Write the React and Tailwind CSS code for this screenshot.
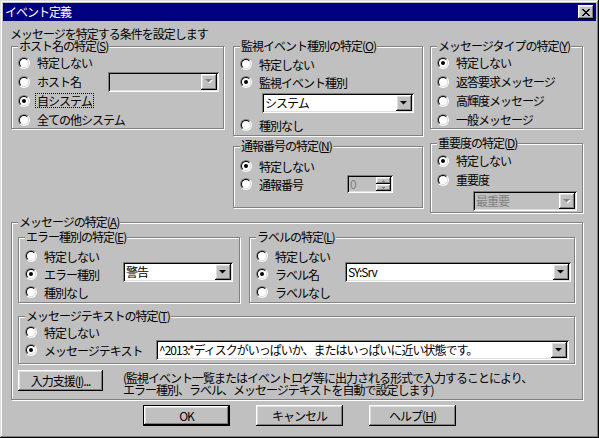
const raised =
  "shadow-[inset_-1px_-1px_#000,inset_1px_1px_#fff,inset_-2px_-2px_#808080,inset_2px_2px_#dfdfdf]";
const sunken =
  "shadow-[inset_1px_1px_#808080,inset_-1px_-1px_#fff,inset_2px_2px_#000,inset_-2px_-2px_#dfdfdf]";

export default function App() {
  return (
    <div
      className={`w-[599px] h-[438px] bg-[#c0c0c0] p-[3px] flex flex-col text-[12px] text-black tracking-[-1px] font-['Noto_Sans_CJK_JP','Noto_Sans',sans-serif] shadow-[inset_-1px_-1px_#000,inset_1px_1px_#dfdfdf,inset_-2px_-2px_#808080,inset_2px_2px_#fff]`}
    >
      {/* Title bar */}
      <div className="h-[18px] bg-[#000080] flex items-center justify-between pl-[2px] pr-[2px]">
        <span className="text-white leading-[14px]">イベント定義</span>
        <button className={`w-[16px] h-[14px] bg-[#c0c0c0] flex items-center justify-center ${raised}`}>
          <svg width="8" height="7" viewBox="0 0 8 7">
            <path
              d="M0 0h2v1h1v1h2V1h1V0h2v1H7v1H6v1H5v1h1v1h1v1h1v1H6V6H5V5H3v1H2v1H0V6h1V5h1V4h1V3H2V2H1V1H0z"
              fill="#000"
            />
          </svg>
        </button>
      </div>

      {/* Body */}
      <div className="flex flex-col pl-[8px]">
        <div className="mt-[7px] leading-[12px] -ml-[1px]">
          メッセージを特定する条件を設定します
        </div>

        {/* Top groups */}
        <div className="flex items-start mt-[6px]">
          <div className="w-[213px]">
            <Group title="ホスト名の特定" mn="S" className="h-[83px]">
              <div className="pt-[6px] pl-[6px] pr-[4px]">
                <Radio label="特定しない" />
                <div className="flex items-center h-[19px]">
                  <Radio label="ホスト名" />
                  <Combo value="" disabled className="ml-auto w-[111px]" />
                </div>
                <Radio label="自システム" checked focus />
                <Radio label="全ての他システム" />
              </div>
            </Group>
          </div>

          <div className="w-[190px] ml-[9px]">
            <Group title="監視イベント種別の特定" mn="O" className="h-[90px]">
              <div className="pt-[8px] pl-[6px]">
                <Radio label="特定しない" h="h-[18px]" />
                <Radio label="監視イベント種別" checked h="h-[18px]" />
                <Combo value="システム" className="mt-[2px] ml-[22px] w-[152px]" />
                <Radio label="種別なし" h="h-[18px]" className="mt-[3px]" />
              </div>
            </Group>
            <Group title="通報番号の特定" mn="N" className="h-[62px] mt-[10px]">
              <div className="pt-[10px] pl-[6px] pr-[29px]">
                <Radio label="特定しない" checked h="h-[18px]" />
                <div className="flex items-center h-[18px]">
                  <Radio label="通報番号" h="h-[18px]" />
                  <Spinner />
                </div>
              </div>
            </Group>
          </div>

          <div className="w-[153px] ml-[7px]">
            <Group title="メッセージタイプの特定" mn="Y" className="h-[83px]">
              <div className="pt-[6px] pl-[6px]">
                <Radio label="特定しない" checked />
                <Radio label="返答要求メッセージ" />
                <Radio label="高輝度メッセージ" />
                <Radio label="一般メッセージ" />
              </div>
            </Group>
            <Group title="重要度の特定" mn="D" className="h-[70px] mt-[14px]">
              <div className="pt-[7px] pl-[6px]">
                <Radio label="特定しない" checked />
                <Radio label="重要度" />
                <Combo value="最重要" disabled className="mt-[2px] ml-[36px] w-[104px]" />
              </div>
            </Group>
          </div>
        </div>

        {/* Message group */}
        <Group title="メッセージの特定" mn="A" className="w-[572px] h-[178px] mt-[9px]">
          <div className="pt-[14px] pl-[6px] flex flex-col">
            <div className="flex">
              <Group title="エラー種別の特定" mn="E" className="w-[222px] h-[66px]">
                <div className="flex pt-[9px] pl-[6px] pr-[6px]">
                  <div>
                    <Radio label="特定しない" h="h-[18px]" />
                    <Radio label="エラー種別" checked h="h-[18px]" />
                    <Radio label="種別なし" h="h-[18px]" />
                  </div>
                  <Combo value="警告" className="ml-auto mt-[15px] w-[110px]" />
                </div>
              </Group>
              <Group title="ラベルの特定" mn="L" className="w-[326px] h-[66px] ml-[9px]">
                <div className="flex pt-[9px] pl-[6px] pr-[3px]">
                  <div>
                    <Radio label="特定しない" h="h-[18px]" />
                    <Radio label="ラベル名" checked h="h-[18px]" />
                    <Radio label="ラベルなし" h="h-[18px]" />
                  </div>
                  <Combo value="SY:Srv" className="ml-auto mt-[15px] w-[226px]" />
                </div>
              </Group>
            </div>

            <Group title="メッセージテキストの特定" mn="T" className="w-[557px] h-[48px] mt-[13px]">
              <div className="pt-[6px] pl-[6px] pr-[5px]">
                <Radio label="特定しない" h="h-[18px]" />
                <div className="flex items-center h-[18px]">
                  <Radio label="メッセージテキスト" checked h="h-[18px]" />
                  <Combo
                    value="^2013:*ディスクがいっぱいか、またはいっぱいに近い状態です。"
                    className="ml-auto w-[413px]"
                  />
                </div>
              </div>
            </Group>

            <div className="flex items-start mt-[6px]">
              <Button className="w-[85px]">
                入力支援(<u>I</u>)...
              </Button>
              <div className="ml-[20px] leading-[12px] pt-[2px]">
                <div>(監視イベント一覧またはイベントログ等に出力される形式で入力することにより、</div>
                <div>エラー種別、ラベル、メッセージテキストを自動で設定します)</div>
              </div>
            </div>
          </div>
        </Group>
      </div>

      {/* Bottom buttons */}
      <div className="flex justify-center gap-[26px] mt-[5px]">
        <Button className="w-[87px]" isDefault>
          OK
        </Button>
        <Button className="w-[87px]">キャンセル</Button>
        <Button className="w-[87px]">
          ヘルプ(<u>H</u>)
        </Button>
      </div>
    </div>
  );
}

/* ---------------- Small UI parts ---------------- */

function Group({ title, mn, className = "", children }) {
  return (
    <div
      className={`relative border border-[#808080] shadow-[inset_1px_1px_#fff,1px_1px_#fff] ${className}`}
    >
      <span className="absolute left-[6px] -top-[7px] px-px bg-[#c0c0c0] leading-[12px] whitespace-nowrap">
        {title}(<u>{mn}</u>)
      </span>
      {children}
    </div>
  );
}

function Radio({ label, checked, focus, h = "h-[19px]", className = "" }) {
  return (
    <div className={`flex items-center ${h} ${className}`}>
      <span className="w-[12px] h-[12px] shrink-0 rounded-full border border-t-[#808080] border-l-[#808080] border-r-white border-b-white flex">
        <span className="w-full h-full rounded-full border border-t-black border-l-black border-r-[#dfdfdf] border-b-[#dfdfdf] bg-white flex items-center justify-center">
          {checked && <span className="w-[4px] h-[4px] rounded-full bg-black" />}
        </span>
      </span>
      <span
        className={`ml-[5px] px-px leading-[13px] whitespace-nowrap border border-dotted ${
          focus ? "border-black" : "border-transparent"
        }`}
      >
        {label}
      </span>
    </div>
  );
}

function Arrow({ disabled }) {
  return (
    <svg width="8" height="5" viewBox="0 0 8 5">
      {disabled && <path d="M1 1h7L4.5 4.5z" fill="#fff" />}
      <path d="M0 0h7L3.5 3.5z" fill={disabled ? "#808080" : "#000"} />
    </svg>
  );
}

function Combo({ value, disabled, className = "" }) {
  return (
    <div
      className={`flex items-center h-[20px] p-[2px] shrink-0 ${sunken} ${
        disabled ? "bg-[#c0c0c0] text-[#808080]" : "bg-white"
      } ${className}`}
    >
      <span className="flex-1 pl-[1px] leading-[16px] whitespace-nowrap">{value}</span>
      <span className={`w-[16px] h-[16px] bg-[#c0c0c0] flex items-center justify-center ${raised}`}>
        <Arrow disabled={disabled} />
      </span>
    </div>
  );
}

function Spinner() {
  return (
    <div className={`ml-auto flex h-[18px] w-[46px] p-[2px] bg-[#c0c0c0] ${sunken}`}>
      <span className="flex-1 pl-[1px] leading-[14px] text-[#808080]">0</span>
      <span className="flex flex-col w-[15px]">
        <span className={`flex-1 bg-[#c0c0c0] flex items-center justify-center ${raised}`}>
          <svg width="3" height="2" viewBox="0 0 3 2">
            <path d="M1 0h1v1h1v1H0V1h1z" fill="#808080" />
          </svg>
        </span>
        <span className={`flex-1 bg-[#c0c0c0] flex items-center justify-center ${raised}`}>
          <svg width="3" height="2" viewBox="0 0 3 2">
            <path d="M0 0h3v1H2v1H1V1H0z" fill="#808080" />
          </svg>
        </span>
      </span>
    </div>
  );
}

function Button({ children, className = "", isDefault }) {
  return (
    <button
      className={`h-[21px] bg-[#c0c0c0] flex items-center justify-center leading-[14px] ${
        isDefault
          ? "border border-black shadow-[inset_-1px_-1px_#000,inset_1px_1px_#fff,inset_-2px_-2px_#808080,inset_2px_2px_#dfdfdf]"
          : raised
      } ${className}`}
    >
      {children}
    </button>
  );
}
